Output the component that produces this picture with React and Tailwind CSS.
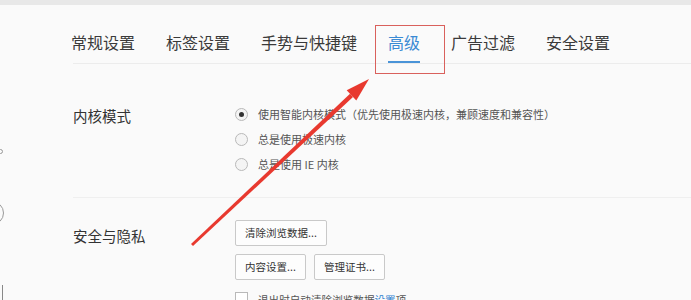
const tabs = ["常规设置", "标签设置", "手势与快捷键", "高级", "广告过滤", "安全设置"];

const modes = [
  { label: "使用智能内核模式（优先使用极速内核，兼顾速度和兼容性）", checked: true },
  { label: "总是使用极速内核", checked: false },
  { label: "总是使用 IE 内核", checked: false },
];

function Radio({ checked }) {
  return (
    <span className="w-[13px] h-[13px] rounded-full border border-[#b9b9b9] bg-[#f4f4f4] flex items-center justify-center shrink-0">
      {checked && <span className="w-[5px] h-[5px] rounded-full bg-[#333]"></span>}
    </span>
  );
}

function Btn({ children, w }) {
  return (
    <button className={`h-[26px] ${w} border border-[#c9c9c9] rounded-[2px] bg-[#fdfdfd] text-[10.5px] text-[#333] flex items-center justify-center`}>
      {children}
    </button>
  );
}

export default function App() {
  return (
    <div
      className="relative w-[691px] h-[300px] overflow-hidden bg-[#fafafa] text-[#333]"
      style={{ fontFamily: '"Noto Sans CJK SC", "Liberation Sans", sans-serif' }}
    >
      <div className="h-[5px] bg-[#e8e8e8]"></div>

      <div className="flex">
        {/* cut-off sidebar bits */}
        <div className="w-[73px] shrink-0 flex flex-col">
          <span className="mt-[144px] -ml-[2px] w-[5px] h-[5px] rounded-full border border-[#999]"></span>
          <span className="mt-[47px] -ml-[20px] w-[24px] h-[24px] rounded-full border border-[#999]"></span>
          <span className="mt-[60px] ml-[2px] w-px h-[20px] bg-[#888]"></span>
        </div>

        <div className="flex-1">
          {/* tab bar */}
          <div className="flex items-end gap-[31px] border-b border-[#ececec] h-[59px]">
            {tabs.map((t, i) => {
              const active = t === "高级";
              return (
                <div key={t} className={`flex flex-col ${i === 0 ? "-ml-[2px]" : ""}`}>
                  <span className={`text-[16px] leading-[22px] ${active ? "text-[#3a8ad4]" : "text-[#3a3a3a]"}`}>{t}</span>
                  <span className={`mt-[8px] h-[2px] ${active ? "bg-[#4a94d8]" : "bg-transparent"}`}></span>
                </div>
              );
            })}
          </div>

          {/* kernel mode */}
          <div className="flex pt-[38px] pb-[20px] border-b border-[#efefef]">
            <div className="w-[162px] text-[14.5px] leading-[25px] mt-[1px]">内核模式</div>
            <div className="flex flex-col">
              {modes.map((m) => (
                <div key={m.label} className="h-[25px] flex items-center gap-[10px]">
                  <Radio checked={m.checked} />
                  <span className="text-[11px] text-[#555]">{m.label}</span>
                </div>
              ))}
            </div>
          </div>

          {/* security */}
          <div className="flex pt-[22px]">
            <div className="w-[162px] text-[14.5px] leading-[25px] mt-[3px]">安全与隐私</div>
            <div className="flex flex-col gap-[8px]">
              <Btn w="w-[92px]">清除浏览数据...</Btn>
              <div className="flex gap-[8px]">
                <Btn w="w-[71px]">内容设置...</Btn>
                <Btn w="w-[71px]">管理证书...</Btn>
              </div>
              <div className="flex items-start gap-[10px] mt-[4px]">
                <span className="w-[13px] h-[13px] border border-[#b9b9b9] bg-white shrink-0"></span>
                <span className="text-[10.6px] leading-[13px] text-[#555] mt-[1px]">
                  退出时自动清除浏览数据<span className="text-[#2f7fd0]">设置</span>项
                </span>
              </div>
            </div>
          </div>
        </div>
      </div>

      {/* annotation overlay */}
      <div className="absolute left-[375px] top-[25px] w-[70px] h-[49px] border-[1.5px] border-[#d9605c]"></div>
      <svg className="absolute inset-0 pointer-events-none" width="691" height="300">
        <polygon points="191,244 193,246 353,97 350,93.8" fill="#e8392f" />
        <polygon points="369,79 356.3,100.5 346.7,90.3" fill="#e8392f" />
      </svg>
    </div>
  );
}
